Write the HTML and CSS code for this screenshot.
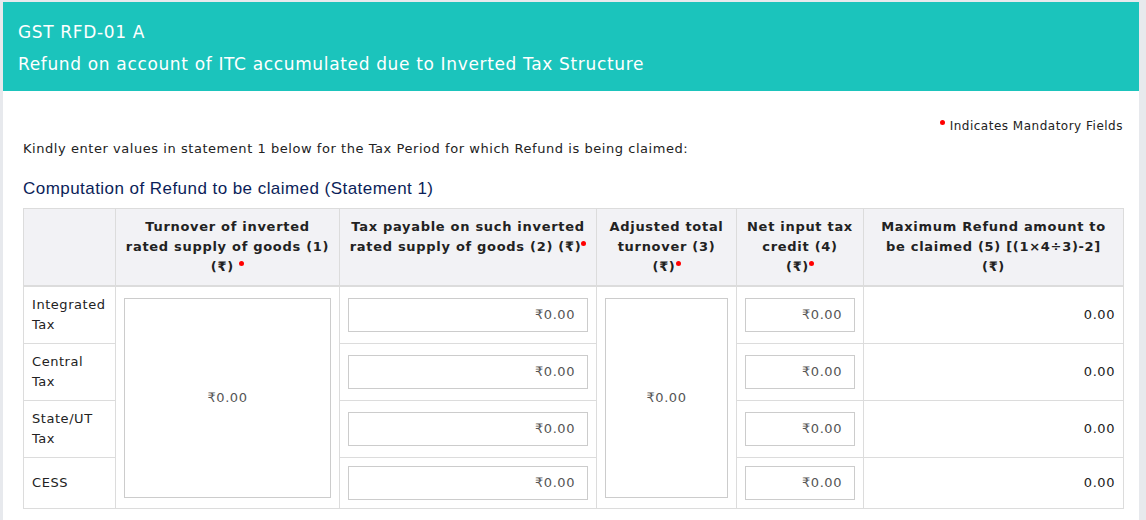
FILE: index.html
```html
<!DOCTYPE html>
<html>
<head>
<meta charset="utf-8">
<link rel="stylesheet" href="styles.css">
</head>
<body>
<div class="page">
  <div class="banner">
    <div class="banner-code">GST RFD-01 A</div>
    <div class="banner-title">Refund on account of ITC accumulated due to Inverted Tax Structure</div>
  </div>
  <div class="content">
    <div class="mandatory"><span class="dot"></span> Indicates Mandatory Fields</div>
    <p class="intro">Kindly enter values in statement 1 below for the Tax Period for which Refund is being claimed:</p>
    <h4 class="section-title">Computation of Refund to be claimed (Statement 1)</h4>
    <table class="stmt">
      <colgroup>
        <col class="c0"><col class="c1"><col class="c2"><col class="c3"><col class="c4"><col class="c5">
      </colgroup>
      <thead>
        <tr>
          <th></th>
          <th>Turnover of inverted rated supply of goods (1) (₹) <span class="dot"></span></th>
          <th>Tax payable on such inverted rated supply of goods (2) (₹)<span class="dot"></span></th>
          <th>Adjusted total turnover (3) (₹)<span class="dot"></span></th>
          <th>Net input tax credit (4)<br>(₹)<span class="dot"></span></th>
          <th>Maximum Refund amount to be claimed (5) [(1×4÷3)-2] (₹)</th>
        </tr>
      </thead>
      <tbody>
        <tr>
          <td class="label">Integrated Tax</td>
          <td rowspan="4" class="span-cell"><div class="big-input">₹0.00</div></td>
          <td><div class="input">₹0.00</div></td>
          <td rowspan="4" class="span-cell"><div class="big-input">₹0.00</div></td>
          <td><div class="input">₹0.00</div></td>
          <td class="amount">0.00</td>
        </tr>
        <tr>
          <td class="label">Central Tax</td>
          <td><div class="input">₹0.00</div></td>
          <td><div class="input">₹0.00</div></td>
          <td class="amount">0.00</td>
        </tr>
        <tr>
          <td class="label">State/UT Tax</td>
          <td><div class="input">₹0.00</div></td>
          <td><div class="input">₹0.00</div></td>
          <td class="amount">0.00</td>
        </tr>
        <tr>
          <td class="label">CESS</td>
          <td><div class="input">₹0.00</div></td>
          <td><div class="input">₹0.00</div></td>
          <td class="amount">0.00</td>
        </tr>
      </tbody>
    </table>
  </div>
</div>
</body>
</html>
```
FILE: styles.css
```css
html, body {
  margin: 0;
  padding: 0;
  background: #e7e9ed;
}
body {
  font-family: "DejaVu Sans", Verdana, sans-serif;
  font-size: 13px;
  letter-spacing: 0.55px;
  color: #222;
}
.page {
  margin: 2px 7px 0 3px;
  background: #fff;
  min-height: 518px;
}
.banner {
  background: #1bc4bc;
  color: #fff;
  padding: 14px 15px 11px;
  font-size: 17px;
  letter-spacing: 0.65px;
}
.banner-code,
.banner-title {
  line-height: 32px;
}
.content {
  padding: 24px 16px 0 20px;
}
.mandatory {
  text-align: right;
  line-height: 20px;
  font-size: 12px;
  letter-spacing: 0.5px;
  color: #222;
  padding-top: 1px;
}
.dot {
  display: inline-block;
  width: 5px;
  height: 5px;
  border-radius: 50%;
  background: #f00;
  vertical-align: 5px;
  letter-spacing: 0;
}
.intro {
  margin: 3px 0 0;
  line-height: 20px;
}
.section-title {
  margin: 18px 0 7px;
  font-family: "Liberation Sans", Arial, sans-serif;
  font-weight: normal;
  font-size: 17px;
  letter-spacing: 0.45px;
  line-height: 24px;
  color: #0b1e59;
}
.stmt {
  border-collapse: collapse;
  table-layout: fixed;
  width: 1100px;
}
.c0 { width: 92px; }
.c1 { width: 224px; }
.c2 { width: 257px; }
.c3 { width: 140px; }
.c4 { width: 127px; }
.c5 { width: 260px; }
.stmt th,
.stmt td {
  border: 1px solid #dcdcdc;
  padding: 8px;
  line-height: 20px;
}
.stmt th {
  background: #f2f2f5;
  font-weight: bold;
  letter-spacing: 0.7px;
  text-align: center;
  vertical-align: top;
  border-bottom: 2px solid #dcdcdc;
}
.stmt td {
  vertical-align: middle;
}
.label {
  color: #222;
}
.input,
.big-input {
  box-sizing: border-box;
  border: 1px solid #ccc;
  color: #555;
  background: #fff;
}
.input {
  height: 34px;
  line-height: 32px;
  text-align: right;
  padding: 0 12px;
}
.big-input {
  height: 200px;
  display: flex;
  align-items: center;
  justify-content: center;
}
.amount {
  text-align: right;
}
```
